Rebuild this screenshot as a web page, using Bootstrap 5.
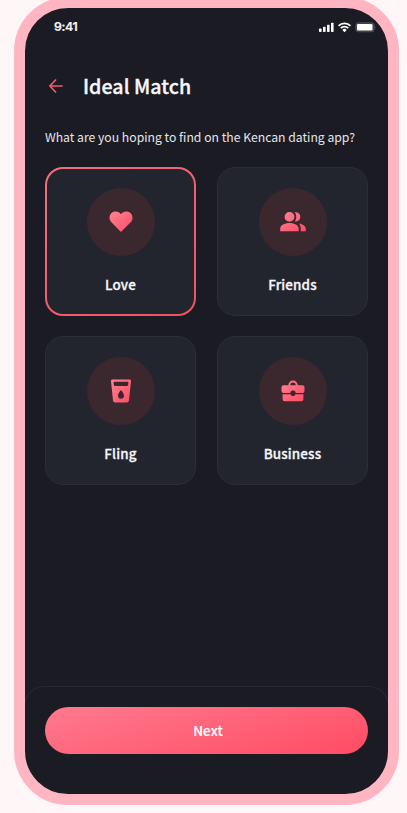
<!DOCTYPE html>
<html lang="en">
<head>
<meta charset="utf-8">
<meta name="viewport" content="width=device-width, initial-scale=1">
<title>Ideal Match</title>
<link href="https://cdn.jsdelivr.net/npm/bootstrap@5.3.0/dist/css/bootstrap.min.css" rel="stylesheet">
<style>
  body { background: #fff6f7; font-family: "Noto Sans CJK SC", "Noto Sans", sans-serif; color: #f6f6f8; height: 813px; }
  .phone { width: 385px; height: 808px; margin: -3px 0 0 14px; border: 11px solid #ffb6c2; border-radius: 54px; background: #1a1b23; }
  .status { height: 37px; padding: 0 12px 0 29px; }
  .clock { font: 600 12.3px/16px Inter, sans-serif; letter-spacing: -.4px; -webkit-text-stroke: .2px; }
  .topbar { height: 40px; margin-top: 21px; padding-left: 23px; gap: 19px; }
  .topbar h1 { font-size: 19.6px; line-height: 30px; font-weight: 500; letter-spacing: .05px; -webkit-text-stroke: .35px; }
  .question { font-size: 12.2px; line-height: 20px; margin-top: 21px; padding: 0 20px; color: #e6e6ea; letter-spacing: 0; white-space: nowrap; }
  .choices { display: grid; grid-template-columns: 151px 151px; gap: 20px 21px; padding: 0 20px; margin-top: 20px; }
  .choice { height: 149px; padding: 20px 0 0; border: 1px solid #2c2d38; border-radius: 18px; background: #23252e; color: #f6f6f8; }
  .choice.selected { border: 2px solid transparent; padding-top: 19px; background: linear-gradient(#23252e, #23252e) padding-box, linear-gradient(145deg, #f3707e, #f14f64) border-box; }
  .disc { width: 68px; height: 68px; background: #3b282f; }
  .choice span { font-size: 13.4px; line-height: 20px; font-weight: 500; letter-spacing: .15px; -webkit-text-stroke: .3px; margin-top: 18px; }
  .dock { height: 108px; margin: 0 -1px; padding: 20px 20px 0; border: 1px solid #282934; border-bottom: 0; border-radius: 20px 20px 0 0; }
  .next { height: 47px; border: 0; color: #fff; font-size: 13.4px; line-height: 45px; font-weight: 500; letter-spacing: .1px; -webkit-text-stroke: .2px; vertical-align: top; background: linear-gradient(165deg, #ff7a8e, #ff4c64); }
  .next span { padding-left: 3px; }
  .next:hover { color: #fff; }
</style>
<script src="https://cdn.jsdelivr.net/npm/bootstrap@5.3.0/dist/js/bootstrap.bundle.min.js"></script>
</head>
<body class="overflow-hidden">
<svg width="0" height="0" class="position-absolute" aria-hidden="true">
  <defs><linearGradient id="rose" x1="0" y1="0" x2="1" y2="1"><stop stop-color="#ff8293"/><stop offset="1" stop-color="#ff4c64"/></linearGradient></defs>
</svg>
<main class="phone d-flex flex-column overflow-hidden">
  <div class="status d-flex align-items-center justify-content-between flex-shrink-0">
    <div class="clock">9:41</div>
    <svg width="58" height="12" viewBox="0 0 58 12" fill="#fff" aria-hidden="true">
      <rect x="1" y="7.5" width="2.6" height="3.500" rx=".7"/><rect x="5" y="5.700" width="2.600" height="5.300" rx=".7"/><rect x="9" y="3.700" width="2.600" height="7.300" rx=".7"/><rect x="13" y="1.700" width="2.600" height="9.300" rx=".7"/>
      <g fill="none" stroke="#fff" stroke-width="1.800"><path d="M20.600 4.900a8.200 8.200 0 0 1 11.800 0"/><path d="M22.800 7.200a5.200 5.200 0 0 1 7.400 0"/></g><path d="M24.400 8.900a3 3 0 0 1 4.200 0L26.500 11.200z"/>
      <rect x="37.800" y="1.800" width="18.400" height="9" rx="2.600" fill="#3e3f47" stroke="#4c4d55"/><rect x="39" y="3" width="15.500" height="6.600" rx="1.300"/><path d="M57 4.900q1 1.400 0 2.800z" fill="#6b6c72"/>
    </svg>
  </div>
  <header class="topbar d-flex align-items-center flex-shrink-0">
    <svg width="16" height="16" viewBox="0 0 16 16" fill="none" stroke="#ef5b6d" stroke-width="1.7" stroke-linecap="round" stroke-linejoin="round" aria-label="Back"><path d="M14 8H2M7.600 2 1.800 8l5.800 6"/></svg>
    <h1 class="m-0">Ideal Match</h1>
  </header>
  <p class="question mb-0">What are you hoping to find on the Kencan dating app?</p>
  <section class="choices">
    <button class="choice selected d-flex flex-column align-items-center">
      <div class="disc rounded-circle d-flex align-items-center justify-content-center"><svg width="24" height="24" viewBox="0 0 24 24" fill="url(#rose)"><path d="M12 22 2.600 12.500A6.200 6.200 0 0 1 .5 8C.5 4.200 3.200 1.500 6.600 1.500c2.300 0 4.200 1 5.400 2.800 1.200-1.800 3.100-2.800 5.400-2.800 3.400 0 6.100 2.700 6.100 6.500 0 1.700-.8 3.300-2.100 4.500z"/></svg></div>
      <span>Love</span>
    </button>
    <button class="choice d-flex flex-column align-items-center">
      <div class="disc rounded-circle d-flex align-items-center justify-content-center"><svg width="26" height="20" viewBox="0 0 26 20" fill="url(#rose)"><path d="M9.500 0a4.900 4.900 0 1 1 0 9.800 4.900 4.900 0 0 1 0-9.800zM14.700 .3a4.700 4.700 0 1 1 0 9.200c2-2.300 2-6.900 0-9.200zM.2 19.200v-2.500c0-3.400 4.600-5.600 9.300-5.600s9.200 2.200 9.200 5.600v2.500zM19 11.400c3.500.6 6.800 2.600 6.800 5.300v2.500h-5v-2.500c0-2.200-.5-3.800-1.800-5.300z"/></svg></div>
      <span>Friends</span>
    </button>
    <button class="choice d-flex flex-column align-items-center">
      <div class="disc rounded-circle d-flex align-items-center justify-content-center"><svg width="20" height="24" viewBox="0 0 20 24" fill="url(#rose)" fill-rule="evenodd"><path d="M1.500 .5h17q1.700 0 1.500 1.700L18 21.500q-.3 2-2.200 2H4.200q-1.900 0-2.200-2L0 2.200Q-.2.500 1.500.500zM3.300 2.800q-.8 0-.7.800l.3 2.700q.1.800 1 .8h12.200q.9 0 1-.8l.3-2.700q.1-.8-.7-.8zM10 11c-1.800 2.300-3 4-3 5.800a3 3 0 0 0 6 0c0-1.800-1.200-3.500-3-5.800z"/></svg></div>
      <span>Fling</span>
    </button>
    <button class="choice d-flex flex-column align-items-center">
      <div class="disc rounded-circle d-flex align-items-center justify-content-center"><svg width="24" height="22" viewBox="0 0 24 22" fill="url(#rose)" fill-rule="evenodd"><path d="M7.300 5.200a4.700 4.700 0 0 1 9.400 0h4.800q2 0 2 2v3.800q0 2-2 2h-6.800q0-2.600-2.700-2.600T9.300 13H2.500q-2 0-2-2V7.200q0-2 2-2zM9.300 5.200h5.400a2.700 2.700 0 0 0-5.400 0zM1.600 14.200h7.900q.5 1.900 2.500 1.900t2.500-1.900h7.900v5.100q0 2-2 2H3.600q-2 0-2-2z"/></svg></div>
      <span>Business</span>
    </button>
  </section>
  <footer class="dock mt-auto flex-shrink-0">
    <button class="next btn rounded-pill w-100 p-0"><span>Next</span></button>
  </footer>
</main>
</body>
</html>
